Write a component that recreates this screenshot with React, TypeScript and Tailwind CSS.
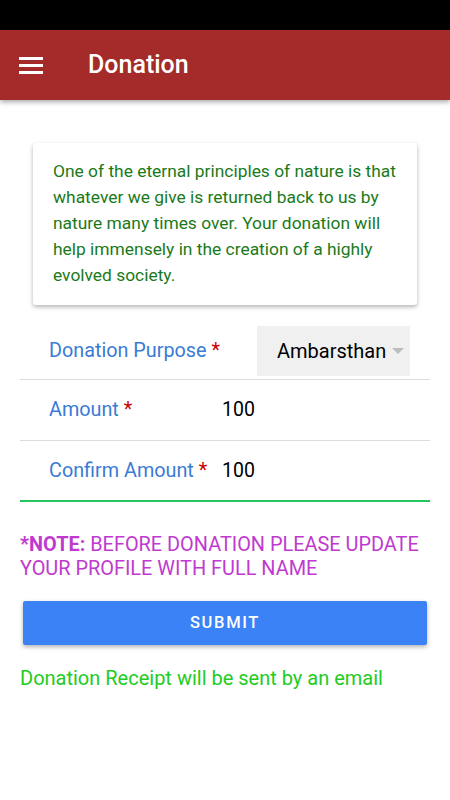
const rows = [
  { label: 'Amount', value: '100' },
  { label: 'Confirm Amount', value: '100' },
];

export default function App() {
  return (
    <div className="w-[450px] min-h-[800px] bg-white font-['Roboto',sans-serif]">
      <div className="h-[30px] bg-black" />
      <header className="h-[70px] bg-[#a52a2a] flex items-center shadow-[0_2px_5px_rgba(0,0,0,0.35)] relative z-10">
        <div className="w-[88px] pl-[19px] flex flex-col gap-[4px]">
          <span className="block w-[24px] h-[3px] bg-white" />
          <span className="block w-[24px] h-[3px] bg-white" />
          <span className="block w-[24px] h-[3px] bg-white" />
        </div>
        <h1 className="text-white text-[25px] font-medium">Donation</h1>
      </header>

      <div className="pt-[43px] px-[33px]">
        <div className="bg-white rounded-[3px] shadow-[0_2px_4px_rgba(0,0,0,0.3)] px-[20px] pt-[15px] pb-[17px]">
          <p className="text-[#1a7a1a] text-[17.4px] leading-[26px]">
            One of the eternal principles of nature is that whatever we give is returned back to us by nature many times over. Your donation will help immensely in the creation of a highly evolved society.
          </p>
        </div>
      </div>

      <div className="mt-[18px] mx-[20px]">
        <div className="h-[57px] flex items-center border-b border-[#dddddd]">
          <span className="pl-[29px] w-[237px] text-[#3a7bd5] text-[19.8px]">
            Donation Purpose <span className="text-[#cc0000]">*</span>
          </span>
          <div className="w-[153px] h-[50px] bg-[#f0f0f0] flex items-center pl-[20px] gap-[6px]">
            <span className="text-black text-[20px]">Ambarsthan</span>
            <svg width="12" height="7" viewBox="0 0 12 7">
              <path d="M0 0 L12 0 L6 6 Z" fill="#bdbdbd" />
            </svg>
          </div>
        </div>
        {rows.map((r, i) => (
          <div
            key={r.label}
            className={`h-[61px] flex items-center ${i === rows.length - 1 ? 'border-b-2 border-[#22c55e]' : 'border-b border-[#dddddd]'}`}
          >
            <span className="pl-[29px] w-[202px] text-[#3a7bd5] text-[19.8px]">
              {r.label} <span className="text-[#cc0000]">*</span>
            </span>
            <span className="text-black text-[19.5px]">{r.value}</span>
          </div>
        ))}
      </div>

      <p className="mt-[31px] px-[20px] text-[#c03ad0] text-[19.9px] leading-[24px]">
        <span className="font-bold">*NOTE:</span> BEFORE DONATION PLEASE UPDATE YOUR PROFILE WITH FULL NAME
      </p>

      <div className="px-[23px] mt-[20px]">
        <button className="w-full h-[44px] bg-[#3b82f6] text-white text-[16.5px] font-medium tracking-[0.1em] rounded-[2px] shadow-[0_2px_4px_rgba(0,0,0,0.3)]">
          SUBMIT
        </button>
      </div>

      <p className="mt-[19px] px-[20px] text-[#22cc22] text-[20px] leading-[28px]">
        Donation Receipt will be sent by an email
      </p>
    </div>
  );
}
